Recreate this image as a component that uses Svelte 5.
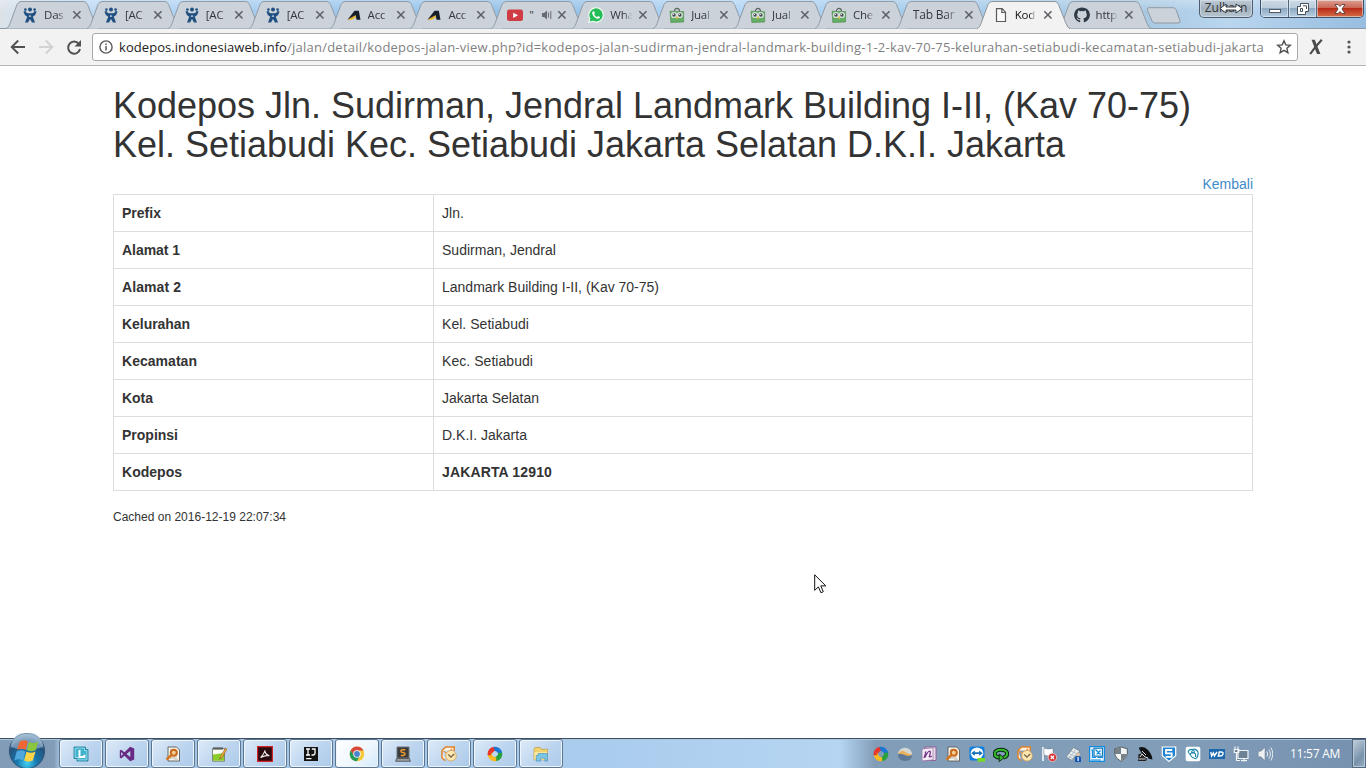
<script>
  const tabs = [
    { icon: 'jira', text: 'Das' },
    { icon: 'jira', text: '[AC' },
    { icon: 'jira', text: '[AC' },
    { icon: 'jira', text: '[AC' },
    { icon: 'acc', text: 'Acc' },
    { icon: 'acc', text: 'Acc' },
    { icon: 'youtube', text: '"', audio: true },
    { icon: 'whatsapp', text: 'Wha' },
    { icon: 'owl', text: 'Jual' },
    { icon: 'owl', text: 'Jual' },
    { icon: 'owl', text: 'Che' },
    { icon: '', text: 'Tab Bar' },
    { icon: 'page', text: 'Kod', active: true },
    { icon: 'github', text: 'http' }
  ];

  const rows = [
    ['Prefix', 'Jln.', 39, 22],
    ['Alamat 1', 'Sudirman, Jendral', 58, 114],
    ['Alamat 2', 'Landmark Building I-II, (Kav 70-75)', 59, 217],
    ['Kelurahan', 'Kel. Setiabudi', 68, 87],
    ['Kecamatan', 'Kec. Setiabudi', 75, 91],
    ['Kota', 'Jakarta Selatan', 31, 97],
    ['Propinsi', 'D.K.I. Jakarta', 56, 85],
    ['Kodepos', 'JAKARTA 12910', 60, 110]
  ];

  const apps = ['lync', 'vs', 'search', 'notepad', 'pdf', 'ij', 'chrome', 'sublime', 'outlook', 'swirl', 'folder'];
  const tray = ['swirl', 'dome', 'onenote', 'search', 'teamviewer', 'sync', 'outlook', 'flag', 'device', 'display', 'shield', 'dish', 'sshield', 'hand', 'wd', 'network', 'volume'];

  // Spreads the letters so that a line takes exactly the given width.
  function fit(node, width) {
    node.style.letterSpacing = '0px';
    const n = node.textContent.length;
    const w = node.getBoundingClientRect().width;
    node.style.letterSpacing = (width - w) / n + 'px';
  }
</script>

{#snippet glyph(name, size = 16)}
  <svg class="glyph" width={size} height={size} viewBox="0 0 16 16">
    {#if name === 'jira'}
      <g fill="#205081">
        <circle cx="8" cy="2.6" r="2" /><circle cx="3.4" cy="2.6" r="1.3" /><circle cx="12.6" cy="2.6" r="1.3" />
        <path d="M1.4 4.4 3.4 3.9Q4.4 6.2 6 6.2H10Q11.6 6.2 12.6 3.9L14.6 4.4Q13.8 8.2 10.8 9.8L13 15.5H10L8 12 6 15.5H3L5.2 9.8Q2.2 8.2 1.4 4.4Z" />
      </g>
      <path d="M6.7 9.2Q8 10.5 9.3 9.2L8 8Z" fill="#d5dfe8" />
    {:else if name === 'acc'}
      <path d="M1.5 12.8 8.5 3.8h4.3l1.7 9h-4L9.7 8.2 6.5 11Z" fill="#17202b" />
      <path d="M1.5 12.8 9.4 8.3 9.9 10.4 5.4 12.8Z" fill="#e8b52c" />
    {:else if name === 'youtube'}
      <rect x="0" y="2.5" width="16" height="11.5" rx="2.3" fill="#cf3c43" /><path d="M6.2 5.7 11 8.3l-4.8 2.6Z" fill="#fff" />
    {:else if name === 'whatsapp'}
      <path d="M.8 15.3 1.8 11.5A7.2 7.2 0 1 1 4.7 14.3Z" fill="#26bd58" stroke="#f1fbf2" stroke-width="1.1" />
      <path d="M5.3 4.2C4.4 4.6 4 5.5 4.3 6.7 5 9.2 7 11.2 9.6 11.8c1.2.2 2.3-.6 2.4-1.7L10.2 9l-1.1 1.1C7.7 9.5 6.8 8.6 6.1 7.2l.8-.9L6.2 4.4Z" fill="#fff" />
    {:else if name === 'owl'}
      <path d="M5.4 4.5C5.4.4 10.5.4 10.5 4.5" fill="none" stroke="#5b6460" stroke-width="1.2" />
      <path d="M1 4.2 14.6 4.6V15L1.8 15.5Z" fill="#65ae65" stroke="#49884a" stroke-width=".6" />
      <circle cx="5" cy="8" r="3.1" fill="#d7e0de" /><circle cx="10.9" cy="8" r="3.1" fill="#d7e0de" />
      <circle cx="5" cy="8" r="1.7" fill="#454b4b" /><circle cx="10.9" cy="8" r="1.7" fill="#454b4b" />
      <circle cx="4.5" cy="7.5" r=".6" fill="#fff" /><circle cx="10.4" cy="7.5" r=".6" fill="#fff" />
      <path d="m6.8 10.3 1.2-1 1.2 1L8 12.4Z" fill="#f1c24b" />
    {:else if name === 'page'}
      <path d="M3.5 1.7h5.6l3.4 3.5v9.3h-9ZM8.8 1.7v3.8h3.7" fill="#fafafa" stroke="#5a5a5a" stroke-width="1.2" />
    {:else if name === 'github'}
      <path d="M8 .4a7.6 7.6 0 0 0-2.4 14.9c.4 0 .6-.2.6-.5v-1.6c-2.2.4-2.7-.6-2.9-1.2-.3-.7-.8-.9-.8-1.2.6-.2 1.3.3 1.6.9.6.8 1.2.9 2.1.6 0-.5.3-.8.5-1-1.8-.3-3.5-.9-3.5-3.8 0-.8.3-1.4.8-2-.2-.8 0-1.5.2-2 .9 0 1.5.4 2 .8a7 7 0 0 1 3.6 0c.5-.4 1.2-.8 2-.8.3.5.4 1.2.2 2 .5.6.8 1.2.8 2 0 2.9-1.8 3.5-3.5 3.8.3.2.5.7.5 1.4v2.1c0 .3.2.5.6.5A7.6 7.6 0 0 0 8 .4" fill="#2e3a46" />
    {:else if name === 'lync'}
      <path d="M1 1h11.5v2.5H15V15H4v-2.5H1Z" fill="#1f8fae" stroke="#137f9d" stroke-width=".8" />
      <path d="M2 2h9.5v2.5H14V14H5v-2.5H2Z" fill="#3fb3cd" stroke="#c9f0f8" stroke-width=".7" /><path d="M6.5 4v7h4.8V8.8" fill="none" stroke="#fff" stroke-width="2" />
    {:else if name === 'vs'}
      <path d="M11.2.8 15.2 2.5v11l-4 1.8L5.5 9.7 2.1 12.4.8 11.7V4.4l1.3-.7 3.4 2.6ZM11.3 5 7.5 8l3.8 3ZM2.2 6v4L4.1 8Z" fill="#682a85" fill-rule="evenodd" />
    {:else if name === 'search'}
      <path d="M3 1h8.5l3 3v11H3Z" fill="#f6f4ef" stroke="#5d5b57" stroke-width=".9" />
      <path d="M5 4h3M5 12h7M9 14h4" stroke="#b8b4ac" /><circle cx="8.8" cy="6.8" r="3" fill="#f5cb98" stroke="#c9691c" stroke-width="2" /><path d="m6.5 9-5 4.5" stroke="#d27521" stroke-width="2.6" />
    {:else if name === 'notepad'}
      <path d="M1.5 2.5h12v12.7h-12Z" fill="#f9fbf5" stroke="#686f60" stroke-width=".8" /><path d="M2 8.5 13 7v7.8H2Z" fill="#8ccd2b" /><path d="M3 1v3m2-3v3m2-3v3m2-3v3m2-3v3" stroke="#292d28" stroke-width=".9" /><path d="m14.7 2-5.3 8.5-.6 2.7L11 11.5l5-8.2Z" fill="#f6b734" stroke="#844b32" stroke-width=".6" />
    {:else if name === 'pdf'}
      <path d="M.6.6h14.8v14.8H.6Z" fill="#2a0c0e" stroke="#d52228" stroke-width="1.2" /><path d="M3.6 11.8C5 9.8 8 6.5 7.8 4.4M7.8 4.4C8 7.5 10 9 12.4 9.8M3.8 11.5Q8 9 12.3 9.8" fill="none" stroke="#eee" stroke-width="1.1" />
    {:else if name === 'ij'}
      <rect x="1" y="1" width="14" height="14" fill="#131313" /><path d="M3 3h4M5 3v6M3 9h4M8.8 3H12v4.2Q12 9 10.3 9H8.5M3.2 12.6h5.2" fill="none" stroke="#fff" stroke-width="1.3" />
    {:else if name === 'chrome'}
      <circle cx="8" cy="8" r="7.3" fill="#f4ca3c" /><path d="M1.6 4.5A7.3 7.3 0 0 1 14.5 4.5H8L4.9 9.7Z" fill="#d9483b" /><path d="M1.6 4.5A7.3 7.3 0 0 0 7.8 15.3L11 9.8 5.5 10.3Z" fill="#239957" /><circle cx="8" cy="8" r="3.8" fill="#f5f5f5" /><circle cx="8" cy="8" r="2.9" fill="#4b83cf" />
    {:else if name === 'sublime'}
      <path d="M2 1h12v11H2Z" fill="#3b3b3b" stroke="#6f7276" /><path d="m1.5 12.5-.8 2.8h14.6l-.8-2.8Z" fill="#9a9da1" stroke="#44484b" stroke-width=".8" /><path d="M10.3 3.8H7.4Q5.9 3.8 6 5.2 6 6.4 8 6.5 10 6.7 10 8 10 9.4 8.5 9.4H5.8" fill="none" stroke="#ee9b31" stroke-width="1.5" />
    {:else if name === 'outlook'}
      <path d="M1 4.2V12L4.4 14.7M1 4.2 4.7 1h8.5v4" fill="#fff6e8" stroke="#df8127" stroke-width="1.5" /><path d="m2.5 4.8 3 2.7 5.8-4.7" fill="none" stroke="#e59c4b" stroke-width="1.2" /><circle cx="10" cy="9.7" r="5.3" fill="#fbe6ad" stroke="#cda166" stroke-width=".8" /><path d="m7.3 8.5 2.6 2.6L13.3 8" fill="none" stroke="#7a644e" stroke-width="1.3" />
    {:else if name === 'swirl'}
      <path d="M10.8 4.2C9.6 1 6.5.2 4.2 1.8A7.4 7.4 0 0 0 .8 9.2L4.8 9.2C4.6 6.5 7.5 4 10.8 4.2" fill="#e8362c" />
      <path d="M11.8 10.8C15 9.6 15.8 6.5 14.2 4.2A7.4 7.4 0 0 0 6.8.8L6.8 4.8C9.5 4.6 12 7.5 11.8 10.8" fill="#1b77d3" />
      <path d="M5.2 11.8C6.4 15 9.5 15.8 11.8 14.2A7.4 7.4 0 0 0 15.2 6.8L11.2 6.8C11.4 9.5 8.5 12 5.2 11.8" fill="#25a23b" />
      <path d="M4.2 5.2C1 6.4.2 9.5 1.8 11.8A7.4 7.4 0 0 0 9.2 15.2L9.2 11.2C6.5 11.4 4 8.5 4.2 5.2" fill="#f9ba21" />
      <path d="M4.2 5.2Q3.4 7 4 9.2H.8Q.5 4.5 4.2 1.8Q7 1 8 4.3Q5.5 5 4.8 7Z" fill="#e8362c" />
    {:else if name === 'folder'}
      <path d="M1 3.2 2 1.5h5.2l1.2 1.8h6.1v10.5H1Z" fill="#f1d26d" stroke="#bd9b41" stroke-width=".7" /><path d="M1.4 6h12.8v7.6H1.4Z" fill="#f9e79d" /><path d="M5.2 9.5V7.6h9.2v7.5h-2.5v-3H7.7v3H3.3V9.5Z" fill="#7cc6e8" stroke="#4594c0" stroke-width=".7" />
    {:else if name === 'dome'}
      <path d="M.8 8.5A7.2 6.8 0 0 1 15.2 8.5L8 10Z" fill="#d5d6d2" /><path d="M.8 8.5Q4 5 8 7.5T15.2 9.5Q14 15 8 15 1.4 14.5.8 8.5" fill="#5f7898" /><path d="M1 8Q4.5 2.5 9 6.5 12 8.8 15.2 8.2 13 11 8.5 9.2 4.5 7 1 8" fill="#e7b05b" />
    {:else if name === 'onenote'}
      <path d="M4 1h11v13.5H4Z" fill="#eadced" stroke="#8b6399" /><path d="M1 3 12 1.8v12L1 15Z" fill="#f7eff7" stroke="#9b74a6" stroke-width=".8" /><path d="M3 12Q5 8 4.6 5.4M4 11.5Q7 4.5 9 5.2 10 6 8.3 10.5 9 11.5 10.8 10" fill="none" stroke="#79398d" stroke-width="1.4" />
    {:else if name === 'teamviewer'}
      <rect x=".5" y=".5" width="15" height="14" rx="2.5" fill="#0c7edc" /><ellipse cx="8" cy="7.2" rx="6.3" ry="5.7" fill="#fff" /><path d="m2.2 7.2 3.6-2.6v1.7h4.4V4.6l3.6 2.6-3.6 2.6V8.1H5.8v1.7Z" fill="#116fb7" /><path d="M8.5 12H16v3.7H8.5Z" fill="#78db20" />
    {:else if name === 'sync'}
      <g fill="none"><path d="M6.5 11.5Q1.5 11 1.8 7.5 2.3 3.8 8 3.8T14.2 7.5Q14.2 10.6 10.5 11.5" stroke="#0a250f" stroke-width="4" /><path d="M6.5 11.5Q1.5 11 1.8 7.5 2.3 3.8 8 3.8T14.2 7.5Q14.2 10.6 10.5 11.5" stroke="#35bb2e" stroke-width="2" /></g><path d="M6.2 8 11 11.7 6.2 15.6Z" fill="#35bb2e" stroke="#0a250f" stroke-width=".9" />
    {:else if name === 'flag'}
      <path d="M2 1v14" stroke="#f8fafc" stroke-width="1.6" /><path d="M3 2q4 2 9 .2v7.2Q7 11 3 8.8Z" fill="#fff" stroke="#53606e" stroke-width=".4" /><circle cx="11.4" cy="11.4" r="4.2" fill="#d43236" stroke="#f2dddd" stroke-width=".7" /><path d="m9.8 9.8 3.2 3.2m0-3.2-3.2 3.2" stroke="#fff" stroke-width="1.3" />
    {:else if name === 'device'}
      <path d="M.8 11 8.5 1.5 15 5 7 14.5Z" fill="#e8edf0" stroke="#778b99" /><path d="M4 7.5 11 11M6 5 13 8.5M2.5 10 9 13M4 12l7-8.5m-4 10 6-8" stroke="#9aaab5" stroke-width=".7" /><circle cx="13" cy="8.5" r="2" fill="#ddc7a8" /><path d="M10 16v-4q0-2 3-2t3 2v4Z" fill="#1555b1" /><path d="M12.5 11h1.2v4h-1.2Z" fill="#fff" />
    {:else if name === 'display'}
      <path d="M.6.6h14.8v14.8H.6Z" fill="#f0f9ff" stroke="#168adc" stroke-width="1.3" /><rect x="5" y="2.2" width="8.5" height="8" fill="none" stroke="#1578ba" stroke-width="1.2" /><path d="m6.5 3.5 5 5m0-4-3.8 3.8M2 4h1.5v7.5H7m1.5 0H14M2 14h10" fill="none" stroke="#118bdc" stroke-width="1.2" />
    {:else if name === 'shield'}
      <path d="M8 1 14.3 2.8V8Q13.8 12.5 8 15.3 2.2 12.5 1.7 8V2.8Z" fill="#f3f5f4" stroke="#4c5358" stroke-width=".9" /><path d="M8 1.6v6.3H2V3Zm0 6.3h5.7Q12.8 12 8 14.6Z" fill="#778188" />
    {:else if name === 'dish'}
      <path d="M2 1.5Q7-.5 11 4T15.5 13.5Q10 13 6 8.5T2 1.5" fill="#101113" /><path d="M1.5 8 5 7.5 10 12.5 9 15H1Z" fill="#222" /><path d="m3 11 2-3 3 3 3 1M1.5 13h7M5 5l4 4" fill="none" stroke="#eee" stroke-width=".9" />
    {:else if name === 'sshield'}
      <path d="M1.3 1h13.4v8.8L8 15.4 1.3 9.8Z" fill="#2083d4" stroke="#fff" stroke-width="1.2" /><path d="M11.2 4H5v3.3h5.7v3.5H4.7" fill="none" stroke="#fff" stroke-width="1.8" />
    {:else if name === 'hand'}
      <rect x=".7" y=".7" width="14.6" height="14.6" rx="2" fill="#fff" /><path d="M3 6Q4 3 7 3.5 11 2 13 6 13.5 10 11.5 12M3 6l4.5 5.5L11.5 13M5 8l3-2 2.5 2V11" fill="none" stroke="#218bad" stroke-width="1.1" /><circle cx="8" cy="5.7" r="1.5" fill="none" stroke="#218bad" />
    {:else if name === 'wd'}
      <path d="M0 3h16v10H0Z" fill="#1c68ae" /><path d="m1.8 6 .8 4L4.4 7l1 3L8 6m1.3 4 1-4H12q2.6 0 2 2t-3 2Z" fill="none" stroke="#fff" stroke-width="1.4" />
    {:else if name === 'network'}
      <path d="M5 4.5h10v8H5ZM8 14.7h6m-3-2v2M2 .5v3m3-3v3M1.3 3.5h4.5v3H1.3ZM3.5 7v7.5H7" fill="#6d8395" stroke="#f2f5f7" stroke-width="1.2" />
    {:else if name === 'volume'}
      <path d="M1.2 5.2H4l4-4v13.6l-4-4H1.2Z" fill="#edf1f3" stroke="#687783" stroke-width=".5" /><path d="M9.8 5.5q1.8 2.5 0 5m2-7q3.2 4.5 0 9m2-11q4 6.5 0 13" fill="none" stroke="#e7edf1" stroke-width="1" />
    {/if}
  </svg>
{/snippet}

<div class="screen">
  <header class="tabstrip">
    <div class="tabs">
      {#each tabs as tab}
        <div class="tab" class:active={tab.active}>
          <svg class="shape" width="94" height="29" viewBox="0 0 94 29">
            <path d="M0 28.5C2 28 3 26 4 23.5L11 4.5Q12.5 1.5 15 1.5H78Q80 1.5 81.5 4.5L89 23.5Q91 28.5 93 28.5" />
          </svg>
          <div class="tabbody">
            {#if tab.icon}{@render glyph(tab.icon)}{/if}
            <span class="title" class:wide={!tab.icon} class:short={tab.audio}>{tab.text}</span>
            {#if tab.audio}
              <svg class="audio" width="10" height="10" viewBox="0 0 10 10"><path d="M0 3h2l3-2.5v9L2 7H0Z" fill="#656b71" /><path d="M6.5 2.5v5M8.8 1v8" stroke="#656b71" /></svg>
            {/if}
            <svg class="close" width="10" height="10" viewBox="0 0 10 10"><path d="m1.3 1.3 7.2 7.2m0-7.2L1.3 8.5" /></svg>
          </div>
        </div>
      {/each}
    </div>
    <svg class="newtab" width="36" height="17" viewBox="0 0 36 17"><path d="M3 .7h24q2 0 3 2l4 10.8q1 2.5-2 2.5H9q-2 0-3-2L1.4 3Q.7.7 3 .7Z" fill="#cbd2d9" stroke="#929aa3" /></svg>
    <div class="winbuttons">
      <div class="user"><span>Zulkarn</span>
        <svg width="26" height="13" viewBox="0 0 26 13"><path d="m2 6.5 6-4.5v3h10V2l6 4.5-6 4.5V8H8v3Z" fill="#fff" stroke="#353b40" /></svg>
      </div>
      <div class="controls">
        <div class="ctl"><svg width="14" height="12"><rect x="1.5" y="6.5" width="11" height="3" fill="#fff" stroke="#525a63" /></svg></div>
        <div class="ctl"><svg width="14" height="14"><path d="M4.5 1.5h8v8h-3v3h-8v-8h3Z" fill="#fff" stroke="#46515c" /><path d="M4.5 6.5h2v3h-2ZM7 3.8h3.5V7" fill="none" stroke="#46515c" /></svg></div>
        <div class="ctl red"><svg width="14" height="12" viewBox="0 0 14 12"><path d="M2 1.5h3l2 2 2-2h3L9 6l3 4.5H9l-2-2-2 2H2L5 6Z" fill="#fff" stroke="#553a3a" stroke-width=".9" /></svg></div>
      </div>
    </div>
  </header>

  <div class="toolbar">
    <svg class="nav" width="92" height="37" viewBox="0 29 92 37" fill="none">
      <path d="M25 47H12m6.2-6.5L11.7 47l6.5 6.5" stroke="#505050" stroke-width="1.9" />
      <path d="M39 47h13m-6.2-6.5 6.5 6.5-6.5 6.5" stroke="#d2d2d2" stroke-width="1.9" />
      <path d="M78.8 43.8A6 6 0 1 0 80 49" stroke="#505050" stroke-width="2" /><path d="M81 40v6.5h-6.5Z" fill="#505050" />
    </svg>
    <div class="omnibox">
      <svg class="info" width="14" height="14" viewBox="0 0 14 14"><circle cx="7" cy="7" r="6.1" fill="none" stroke="#5a5a5a" stroke-width="1.4" /><path d="M7 6v4.6M7 3.4v1.5" stroke="#5a5a5a" stroke-width="1.5" /></svg>
      <div class="url"><span class="host" use:fit={168}>kodepos.indonesiaweb.info</span><span use:fit={977}>/jalan/detail/kodepos-jalan-view.php?id=kodepos-jalan-sudirman-jendral-landmark-building-1-2-kav-70-75-kelurahan-setiabudi-kecamatan-setiabudi-jakarta</span></div>
      <svg class="star" width="16" height="16" viewBox="0 0 16 16"><path d="m8 1.8 1.8 4.1 4.5.4-3.4 3 1 4.4L8 11.4l-3.9 2.3 1-4.4-3.4-3 4.5-.4Z" fill="none" stroke="#515151" stroke-width="1.4" /></svg>
    </div>
    <svg class="ext" width="14" height="16" viewBox="0 0 14 16"><path d="M2.5.8H5.8L11.4 15H8Z" fill="#4b4b4b" /><path d="M12.8.8Q6 8 1.2 15" fill="none" stroke="#4b4b4b" stroke-width="2.2" /></svg>
    <svg class="dots" width="4" height="14" viewBox="0 0 4 14"><g fill="#555"><circle cx="2" cy="2" r="1.6" /><circle cx="2" cy="7" r="1.6" /><circle cx="2" cy="12" r="1.6" /></g></svg>
  </div>

  <main>
    <h1><span use:fit={1078}>Kodepos Jln. Sudirman, Jendral Landmark Building I-II, (Kav 70-75)</span><br /><span use:fit={952}>Kel. Setiabudi Kec. Setiabudi Jakarta Selatan D.K.I. Jakarta</span></h1>
    <div class="back"><span use:fit={50.5}>Kembali</span></div>
    <div class="table">
      {#each rows as row, i}
        <div class="row">
          <div class="cell label"><span use:fit={row[2]}>{row[0]}</span></div>
          <div class="cell" class:strong={i === 7}><span use:fit={row[3]}>{row[1]}</span></div>
        </div>
      {/each}
    </div>
    <div class="cached"><span use:fit={173}>Cached on 2016-12-19 22:07:34</span></div>
  </main>

  <svg class="cursor" width="13" height="20" viewBox="0 0 13 20"><path d="M.7.8v15.5l3.7-3.4 2.5 5.8 2.4-1-2.5-5.8h5Z" fill="#fff" stroke="#111" /></svg>

  <footer>
    <div class="start">
      <svg width="38" height="36" viewBox="0 0 38 36">
        <defs><radialGradient id="orb" cx=".5" cy=".85" r=".8"><stop offset="0" stop-color="#46d1f3" /><stop offset=".35" stop-color="#1678ad" /><stop offset=".75" stop-color="#26527c" /><stop offset="1" stop-color="#7fa1bf" /></radialGradient></defs>
        <circle cx="19" cy="18" r="17.6" fill="url(#orb)" stroke="#315576" stroke-width="1" />
        <path d="M3 14A16 16 0 0 1 35 14Q19 19 3 14" fill="#c2d8e8" opacity=".5" />
        <path d="M11.5 8.8q4-3 8.3-.6L17.8 16.8q-4.5-2.2-8.8.3Z" fill="#ee6636" /><path d="M21 9q4.5 2.4 9.2-.6L27.8 17q-4.5 2.4-9-.1Z" fill="#8bc63e" />
        <path d="M8.6 18.5q4.2-2.4 8.8-.1l-2.4 9q-4.2-2.4-8.6.1Z" fill="#4fa7de" /><path d="M18.5 18.5q4.4 2.4 9 0l-2.6 9q-4.4 2.2-8.8.1Z" fill="#fdd447" />
      </svg>
    </div>
    <div class="apps">
      {#each apps as app}
        <div class="app" class:current={app === 'chrome'}>{@render glyph(app)}</div>
      {/each}
    </div>
    <div class="tray">
      {#each tray as item}{@render glyph(item)}{/each}
    </div>
    <div class="clock"><span use:fit={50}>11:57 AM</span></div>
    <div class="peek"></div>
  </footer>
</div>

<style>
  :global(body) { margin: 0; overflow: hidden; }
  .screen { position: relative; width: 1366px; height: 768px; display: flex; flex-direction: column; background: #fff; overflow: hidden; font-family: "Liberation Sans", Arial, sans-serif; color: #333; }
  svg { flex: none; display: block; }
  .tabstrip { height: 29px; flex: none; display: flex; background: linear-gradient(#fff4, #fff0 40%), linear-gradient(90deg, #dce3e8 0, #c0dcf5 4%, #9fc9ef 22%, #91bfe6 40%, #b4d6f6 52%, #a5ccec 66%, #a9c9e3 84%, #bad6ef 90%, #97bde0 100%); box-shadow: inset 0 -1px #8d9ba9; }
  .tabs { display: flex; padding-left: 6px; }
  .tab { width: 80.9px; height: 29px; position: relative; flex: none; }
  .shape { position: absolute; left: 0; top: 0; }
  .shape path { fill: #cbd2d9; stroke: #929ca7; stroke-width: 1; }
  .tab.active { z-index: 1; }
  .active .shape path { fill: #f2f2f2; stroke: #8e969e; }
  .active::after { content: ""; position: absolute; left: 1px; right: -11px; top: 28px; height: 1px; background: #f2f2f2; }
  .tabbody { position: relative; display: flex; align-items: center; padding: 3px 0 0 16px; height: 24px; }
  .title { width: 22px; margin-left: 6px; font: 11.5px/20px "Open Sans", sans-serif; color: #33383d; white-space: nowrap; mask-image: linear-gradient(90deg, #000 65%, #0003 90%); letter-spacing: -.2px; }
  .title.wide { width: 44px; margin-left: 1px; font-size: 12px; mask-image: linear-gradient(90deg, #000 70%, #0005); }
  .title.short { width: 7px; margin-left: 6px; mask-image: none; }
  .active .title { color: #111; }
  .audio { margin-left: 6px; }
  .close { margin-left: 6px; }
  .wide + .close { margin-left: 7px; }
  .audio + .close { margin-left: 5px; }
  .close path { stroke: #5d6268; stroke-width: 1.6; fill: none; }
  .newtab { margin: 7px 0 0 8px; }
  .winbuttons { margin-left: auto; display: flex; gap: 7px; padding-right: 2px; height: 19px; }
  .user { width: 52px; height: 17px; border: 1px solid #4e5e70; border-top: 0; border-radius: 0 0 5px 5px; box-shadow: inset 0 0 0 1px #dbe5ee99; background: linear-gradient(#bfcbd5, #a3b1be 50%, #b8c6d1); position: relative; overflow: hidden; font: 12px/16px "Open Sans", sans-serif; color: #333; text-align: center; }
  .user svg { position: absolute; left: 18px; top: 2px; }
  .controls { display: flex; height: 17px; border: 1px solid #3e5269; border-top: 0; border-radius: 0 0 5px 5px; overflow: hidden; }
  .ctl { width: 27px; border-right: 1px solid #52667c; display: flex; align-items: center; justify-content: center; background: linear-gradient(#cedae5, #b9cbdc 48%, #8da8c1 50%, #bad0e4); box-shadow: inset 0 0 0 1px #edf4fa88; }
  .ctl.red { width: 46px; border: 0; background: linear-gradient(#dda191, #cb6757 45%, #b92c19 50%, #d66d47); }
  .toolbar { height: 36px; flex: none; background: #f2f2f2; border-bottom: 1px solid #b6b6b6; display: flex; }
  .omnibox { width: 1204px; height: 26px; margin-top: 4px; border: 1px solid #a9a9a9; border-radius: 3px; background: #fff; display: flex; align-items: center; }
  .info { margin-left: 6px; }
  .url { margin-left: 6px; width: 1145px; white-space: nowrap; font: 13px/20px "Open Sans", sans-serif; color: #7f7f7f; }
  .host { color: #222; }
  .star { margin-left: 12px; }
  .ext { margin: 10px 0 0 11px; }
  .dots { margin: 11px 0 0 24px; }
  main { width: 1140px; margin: 20px 0 0 113px; flex: 1; }
  h1 { margin: 0; font-size: 36px; line-height: 39px; font-weight: 400; height: 89px; white-space: nowrap; }
  .back { text-align: right; font-size: 14px; line-height: 19px; height: 19px; color: #428bca; }
  .table { border: 1px solid #ddd; border-bottom: 0; }
  .row { display: grid; grid-template-columns: 320px 1fr; height: 36px; border-bottom: 1px solid #ddd; }
  .cell { padding: 8px; font-size: 14px; line-height: 20px; white-space: nowrap; }
  .label { border-right: 1px solid #ddd; font-weight: 700; }
  .strong { font-weight: 700; }
  .cached { margin-top: 17px; font-size: 12px; line-height: 18px; }
  .cursor { position: absolute; left: 814px; top: 574px; }
  footer { height: 30px; box-sizing: border-box; flex: none; border-top: 1px solid #3b4e63; display: flex; box-shadow: inset 0 1px #adc8dd; background: linear-gradient(90deg, #829cb7 0, #829cb7 54px, #a4c3e2 60px, #aacced 590px, #b5d5f2 840px, #829db8 875px, #829db8 1180px, #7691af 100%); }
  .start { width: 59px; flex: none; padding-left: 8px; box-sizing: border-box; }
  .start svg { margin-top: -6px; }
  .apps { display: flex; gap: 2px; }
  .app { width: 44px; height: 29px; box-sizing: border-box; display: flex; align-items: center; justify-content: center; border: 1px solid #5c768f; border-radius: 3px; background: linear-gradient(135deg, #deebf8, #bdd5ef 55%, #accae9); box-shadow: inset 0 0 0 1px #edf6ff; }
  .current { background: linear-gradient(135deg, #fff, #edf6fd 60%, #d2e8fa); }
  .tray { margin-left: auto; display: flex; align-items: center; gap: 8px; padding-right: 17px; }
  .clock { width: 62px; color: #fff; font: 12px/29px "Open Sans", sans-serif; white-space: nowrap; }
  .peek { width: 14px; height: 29px; box-sizing: border-box; border: 1px solid #526b83; background: linear-gradient(135deg, #c1cfdb, #7792ab 65%, #9db4c8); box-shadow: inset 0 0 0 1px #b6c7d6; }
</style>
